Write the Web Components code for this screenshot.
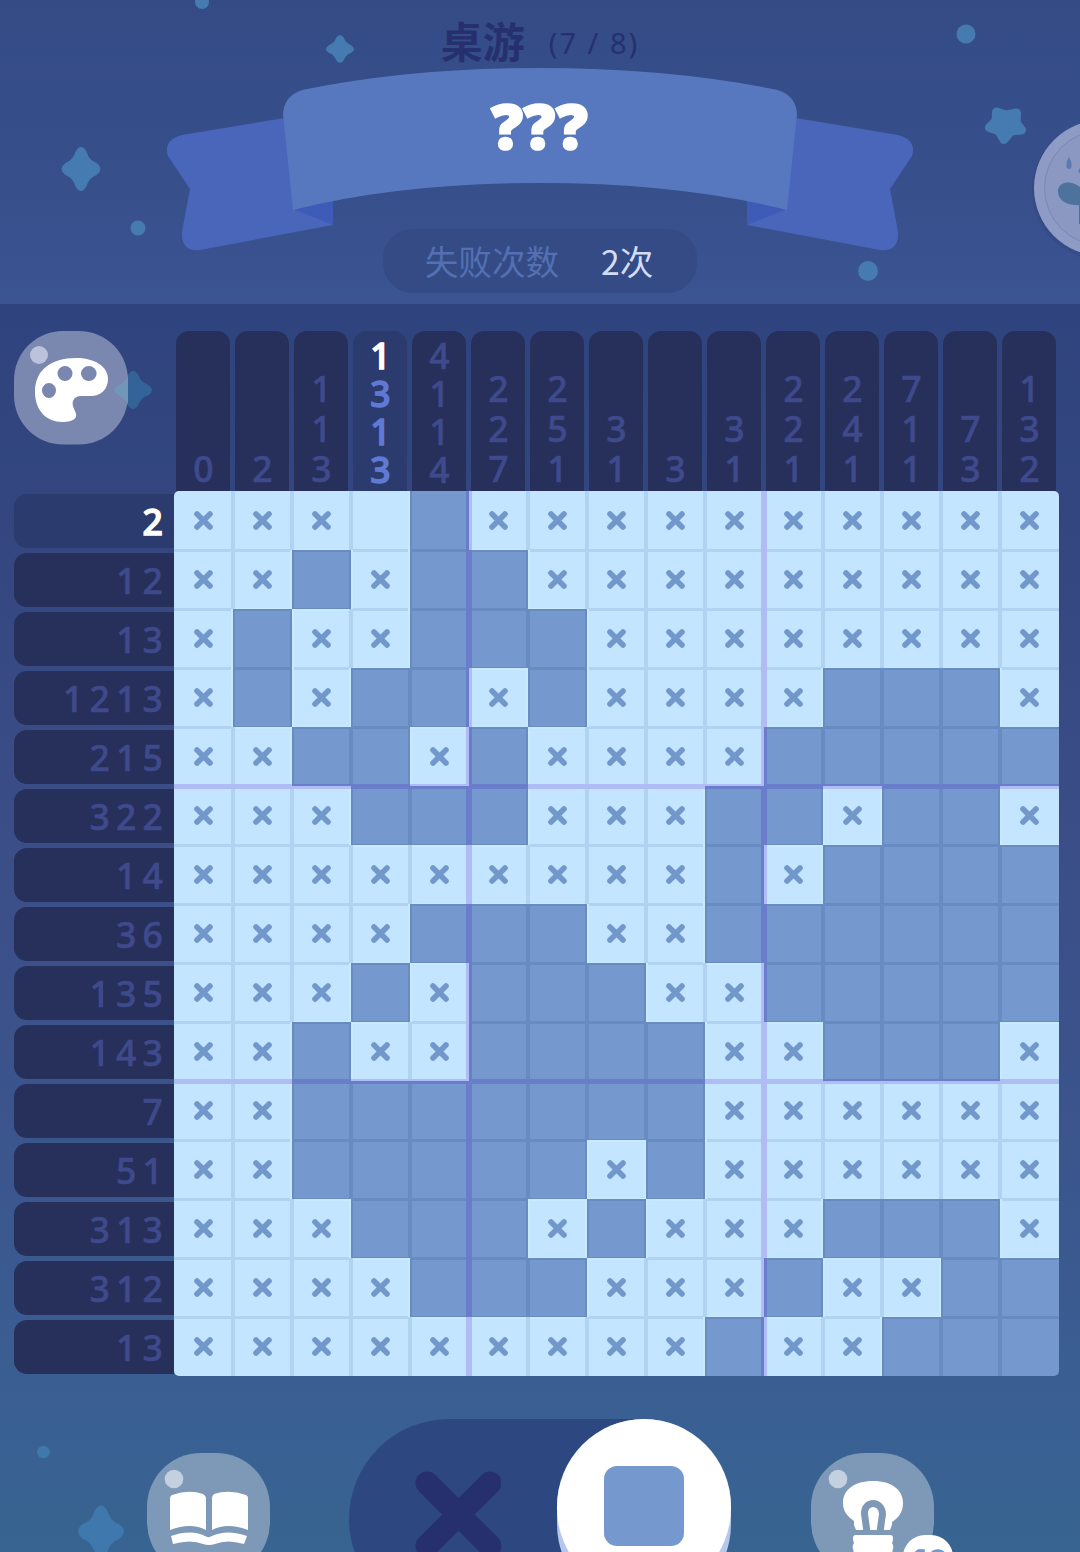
<!DOCTYPE html>
<html lang="zh">
<head>
<meta charset="utf-8">
<title>桌游</title>
<style>
body{
    margin:0;
    width:1080px;
    height:1552px;
    overflow:hidden;
    font-family:"Noto Sans","Noto Sans CJK SC",sans-serif;
}
</style>
</head>
<body>
<game-page>
    <game-header slot="header" failed="2次">
        <span slot="name">桌游</span>
        <span slot="count">(7 / 8)</span>
        <ribbon-title slot="title">???</ribbon-title>
        <span slot="label">失败次数</span>
    </game-header>
    <nono-board slot="board"></nono-board>
    <game-tools slot="tools"></game-tools>
</game-page>

<script>
// clues and cells: # filled, x crossed, . empty
const rowClues = ['2','12','13','1213','215','322','14','36','135','143','7','51','313','312','13']
const colClues = ['0','2','113','1313','4114','227','251','31','3','31','221','241','711','73','132']
const cells = [
    'xxx.#xxxxxxxxxx',
    'xx#x##xxxxxxxxx',
    'x#xx###xxxxxxxx',
    'x#x##x#xxxx###x',
    'xx##x#xxxx#####',
    'xxx###xxx##x##x',
    'xxxxxxxxx#x####',
    'xxxx###xx######',
    'xxx#x###xx#####',
    'xx#xx####xx###x',
    'xx#######xxxxxx',
    'xx#####x#xxxxxx',
    'xxx###x#xxx###x',
    'xxxx###xxx#xx##',
    'xxxxxxxxx#xx###',
]
const activeRow = 0
const activeCol = 3

// four pointed star with soft tips
function sparkle(x, y, w, h, color) {
    return `<path transform="translate(${x} ${y}) scale(${w / 20} ${h / 20})" fill="${color}"
        d="M-5.500 -16Q0 -24 5.500 -16C8 -10 10 -8 16 -5.500Q24 0 16 5.500C10 8 8 10 5.500 16Q0 24 -5.500 16C-8 10 -10 8 -16 5.500Q-24 0 -16 -5.500C-10 -8 -8 -10 -5.500 -16Z"/>`
}

class GamePage extends HTMLElement
{
    constructor() {
        super()
        this._shadowRoot = this.attachShadow({ mode: 'open' })
        this._shadowRoot.innerHTML =
        `<style>
        :host{
            display:grid;
            grid-template-rows:304px 1072px 176px;
            height:1552px;
            overflow:hidden;
            background:linear-gradient(#2f437e 304px, #33467f 520px, #394b85 720px, #3b4f89 900px, #3b568e 1180px, #3a5f93 1400px, #376490 1552px);
        }
        ::slotted(*){ min-width:0; }
        </style>
        <slot name="header"></slot>
        <slot name="board"></slot>
        <slot name="tools"></slot>`
    }
}

class GameHeader extends HTMLElement
{
    constructor() {
        super()
        this._shadowRoot = this.attachShadow({ mode: 'open' })
        const failed = this.getAttribute('failed')
        this._shadowRoot.innerHTML =
        `<style>
        :host{
            display:flex;
            flex-direction:column;
            align-items:center;
            position:relative;
            height:304px;
            overflow:hidden;
            background:linear-gradient(#344b86, #364f8a 50%, #3b5492);
        }
        .sky{ position:absolute; left:0; top:0; }
        .heading{
            display:flex;
            align-items:flex-start;
            gap:24px;
            height:66px;
            color:#27306f;
            position:relative;
            white-space:pre;
        }
        .name{ font:700 42px/80px "Noto Sans CJK SC",sans-serif; }
        .count{ font:400 29px/86px "Noto Sans",sans-serif; letter-spacing:2px; }
        .pill{
            display:flex;
            align-items:center;
            justify-content:center;
            gap:42px;
            box-sizing:border-box;
            padding-right:2px;
            position:relative;
            width:314px;
            height:64px;
            margin-top:-24px;
            border-radius:30px;
            background:#344b86;
            font:400 33.6px/64px "Noto Sans CJK SC",sans-serif;
            color:#5370b2;
        }
        b{ font-weight:400; color:#d3dcf6; }
        </style>
        <svg class="sky" width="1080" height="304">
            ${sparkle(340, 49, 14, 14, '#467bb2')}
            ${sparkle(81, 169, 19.5, 22, '#467bb2')}
            <g fill="#467bb2">
                <circle cx="202" cy="2" r="7"/>
                <circle cx="966" cy="34" r="9.500"/>
                <circle cx="138" cy="228" r="7.500"/>
                <circle cx="868" cy="271" r="10"/>
                <path stroke="#467bb2" stroke-width="9" stroke-linejoin="round"
                    d="M996.500 112L1006 115L1016.500 113L1016 123L1021.500 130L1011 131L1004 139.500L999 131L989.500 127.500L996 121Z"/>
            </g>
            <circle cx="1102" cy="190" r="70" fill="#2b3c78" opacity=".25"/>
            <circle cx="1102" cy="188" r="68" fill="#8e9bc4"/>
            <circle cx="1102" cy="188" r="57.500" fill="#8b98c1" stroke="#7988b5"/>
            <path fill="#5b7ab2" d="M1069 157C1073 164 1072 169 1069 169C1066 169 1065 164 1069 157Z"/>
            <path fill="#4d739d" d="M1080 187C1073 181 1060 180 1058 190C1057 201 1068 206 1079 205L1079 224H1081V187Z"/>
            <circle cx="1081" cy="171" r="2.600" fill="#5b7ab2"/>
        </svg>
        <div class="heading">
            <span class="name"><slot name="name"></slot></span>
            <span class="count"><slot name="count"></slot></span>
        </div>
        <slot name="title"></slot>
        <div class="pill"><slot name="label"></slot><b>${failed}</b></div>`
    }
}

class RibbonTitle extends HTMLElement
{
    constructor() {
        super()
        this._shadowRoot = this.attachShadow({ mode: 'open' })
        this._shadowRoot.innerHTML =
        `<style>
        :host{
            display:grid;
            justify-items:center;
            width:746px;
            height:187px;
        }
        svg, span{ grid-area:1 / 1; }
        span{
            position:relative;
            font:900 62px/119px "Noto Sans",sans-serif;
            letter-spacing:1px;
            color:#fff;
            -webkit-text-stroke:2.5px #fff;
        }
        </style>
        <svg width="746" height="187" viewBox="167 66 746 187">
            <g id="tail">
                <path fill="#4966bb" d="M290 117L182 135Q163 140 168 156L190 189L182 232Q181 252 200 250L333 225V190Z"/>
                <path fill="#3f5bb8" d="M293 209L333 195V225Z"/>
            </g>
            <use href="#tail" transform="translate(1080 0) scale(-1 1)"/>
            <path fill="#5778bf" d="M283 114Q284 96 302 90Q410 68 540 68T778 90Q796 96 797 114L787 210Q680 183 540 183T293 210Z"/>
        </svg>
        <span><slot></slot></span>`
    }
}

class ClueBar extends HTMLElement
{
    constructor() {
        super()
        this._shadowRoot = this.attachShadow({ mode: 'open' })
        const clue = this.getAttribute('clue')
        const digits = this.hasAttribute('column') ? [...clue].map(n => `<span>${n}</span>`).join('') : `<span>${clue}</span>`
        this._shadowRoot.innerHTML =
        `<style>
        :host{
            display:flex;
            align-items:center;
            justify-content:flex-end;
            box-sizing:border-box;
            height:54px;
            padding-right:5px;
            border-radius:13px 0 0 13px;
            background:#272f5b;
            color:#3f4a8c;
            font:500 35.5px/54px "Noto Sans",sans-serif;
            letter-spacing:6.2px;
            -webkit-text-stroke:.6px;
        }
        :host([column]){
            flex-direction:column;
            width:54px;
            height:160px;
            padding:0 0 3px 1px;
            border-radius:13px 13px 0 0;
            letter-spacing:0;
            line-height:40px;
        }
        :host([small]){ line-height:38px; }
        :host([active]){ background:#2b3b6e; color:#fff; -webkit-text-stroke:1.4px; }
        :host([active][column]) span + span{ color:#6079d4; }
        </style>
        ${digits}`
    }
}

class NonoCell extends HTMLElement
{
    constructor() {
        super()
        this._shadowRoot = this.attachShadow({ mode: 'open' })
        const cross = this.getAttribute('state') === 'x' ?
            `<svg width="21" height="21"><path d="M4 4L17 17M17 4L4 17" stroke="#7298cb" stroke-width="5.600" stroke-linecap="round"/></svg>` : ''
        this._shadowRoot.innerHTML =
        `<style>
        :host{
            display:grid;
            place-content:center;
            background:#c4e5ff;
        }
        :host([state="#"]){ background:#7599cf; }
        svg{ display:block; }
        </style>
        ${cross}`
    }
}

class NonoBoard extends HTMLElement
{
    constructor() {
        super()
        this._shadowRoot = this.attachShadow({ mode: 'open' })
        const cols = colClues.map((c, i) =>
            `<clue-bar column clue="${c}" ${c.length > 3 ? 'small' : ''} ${i === activeCol ? 'active' : ''}></clue-bar>`).join('')
        const rows = rowClues.map((c, i) =>
            `<clue-bar clue="${c}" ${i === activeRow ? 'active' : ''}></clue-bar>`).join('')
        let grid = ''
        cells.forEach((line, y) => {
            for (let x = 0; x < 15; x++) {
                grid += `<nono-cell state="${line[x]}" style="box-shadow:${this.lines(x, y)}"></nono-cell>`
            }
        })
        this._shadowRoot.innerHTML =
        `<style>
        :host{
            display:grid;
            grid-template-columns:160px 885px;
            grid-template-rows:160px 885px;
            padding:27px 21px 0 14px;
        }
        .cols{ display:flex; gap:5px; padding-left:2px; }
        .rows{ display:flex; flex-direction:column; gap:5px; padding-top:3px; }
        .cells{
            display:grid;
            grid-template:repeat(15, 59px) / repeat(15, 59px);
            border-radius:5px;
            overflow:hidden;
        }
        </style>
        <palette-button></palette-button>
        <div class="cols">${cols}</div>
        <div class="rows">${rows}</div>
        <div class="cells">${grid}</div>`
    }
    // the line colour depends on both cells that it parts
    lines(x, y) {
        const filled = cells[y][x] === '#'
        const major = [], minor = []
        const add = (nx, ny, isMajor, offset) => {
            if (isMajor) {
                major.push(`inset ${offset} ${filled ? '#697dca' : '#b0bdf4'}`)
            } else if (filled) {
                minor.push(`inset ${offset} #688bc2`)
            } else {
                minor.push(`inset ${offset} ${cells[ny][nx] === '#' ? '#c9eaff' : '#b0d3f2'}`)
            }
        }
        if (x > 0) add(x - 1, y, x % 5 === 0, `${x % 5 ? 2 : 3}px 0`)
        if (x < 14) add(x + 1, y, x % 5 === 4, `${x % 5 < 4 ? -2 : -3}px 0`)
        if (y > 0) add(x, y - 1, y % 5 === 0, `0 ${y % 5 ? 2 : 3}px`)
        if (y < 14) add(x, y + 1, y % 5 === 4, `0 ${y % 5 < 4 ? -1 : -2}px`)
        return [...major, ...minor].join(',')
    }
}

class BubbleButton extends HTMLElement
{
    constructor() {
        super()
        this._shadowRoot = this.attachShadow({ mode: 'open' })
        this._shadowRoot.innerHTML =
        `<style>
        :host{
            display:block;
            width:123px;
            height:123px;
            border-radius:54px;
            background:#7d99b7;
        }
        ::slotted(svg){ display:block; overflow:visible; }
        </style>
        <slot></slot>`
    }
}

class PaletteButton extends HTMLElement
{
    constructor() {
        super()
        this._shadowRoot = this.attachShadow({ mode: 'open' })
        this._shadowRoot.innerHTML =
        `<style>
        :host{ display:block; }
        svg{ display:block; overflow:visible; }
        </style>
        <svg width="146" height="114" viewBox="14 331 146 114">
            ${sparkle(133, 390, 19, 19, '#346399')}
            <rect x="14" y="331" width="114" height="113.500" rx="49" fill="#7a87ae"/>
            <path fill="#7296b8" d="M128 376C124 384 115 385 114 390C115 395 124 396 128 404Z"/>
            <circle cx="39" cy="355" r="9" fill="#bdc2dc"/>
            <path fill="#fff" fill-rule="evenodd" d="M35 392C35 370 51 358 76 358C94 358 108 366 108 379C108 390 100 396 91 396L80 396C73 397 72 402 73 406C74 410 77 413 76 417C74 421 68 422 62 422C47 422 35 411 35 392Z
                M57.500 373.500a7.500 7.500 0 1 0 15 0a7.500 7.500 0 1 0 -15 0Z
                M81 373.500a7.800 7.500 0 1 0 15.600 0a7.800 7.500 0 1 0 -15.600 0Z
                M42 390.500a7 7.500 0 1 0 14 0a7 7.500 0 1 0 -14 0Z"/>
        </svg>`
    }
}

class ModeSwitch extends HTMLElement
{
    constructor() {
        super()
        this._shadowRoot = this.attachShadow({ mode: 'open' })
        this._shadowRoot.innerHTML =
        `<style>
        :host{
            display:flex;
            justify-content:space-between;
            width:382px;
            height:200px;
            border-radius:100px;
            background:#2d4881;
        }
        .cross{ margin:52px 0 0 66px; }
        .knob{
            width:174px;
            height:192px;
            border-radius:87px;
            background:#b5c8ec;
        }
        .face{
            display:grid;
            justify-items:center;
            height:177px;
            border-radius:50%;
            background:#fff;
        }
        .square{
            width:80px;
            height:80px;
            margin-top:47px;
            border-radius:13px;
            background:#7599cf;
        }
        </style>
        <svg class="cross" width="86" height="86"><path d="M12 12L75 75M75 12L12 75" stroke="#27306f" stroke-width="23" stroke-linecap="round"/></svg>
        <div class="knob"><div class="face"><div class="square"></div></div></div>`
    }
}

class GameTools extends HTMLElement
{
    constructor() {
        super()
        this._shadowRoot = this.attachShadow({ mode: 'open' })
        this._shadowRoot.innerHTML =
        `<style>
        :host{
            display:flex;
            align-items:flex-start;
            position:relative;
            height:176px;
            box-sizing:border-box;
            padding:43px 0 0 147px;
            overflow:hidden;
        }
        .sky{ position:absolute; left:0; top:0; }
        bubble-button{ margin-top:34px; }
        mode-switch{ margin:0 80px 0 79px; }
        .badge{
            position:absolute;
            left:903px;
            top:159px;
            width:50px;
            height:50px;
            border-radius:22px;
            background:#fff;
            color:#7599cf;
            text-align:center;
            font:900 33px/53px "Noto Sans",sans-serif;
            -webkit-text-stroke:1.5px;
        }
        </style>
        <svg class="sky" width="300" height="176" viewBox="0 1376 300 176">
            <circle cx="43.500" cy="1452" r="6.300" fill="#3f78ac"/>
            ${sparkle(101, 1531.5, 23, 26, '#3f78ac')}
        </svg>
        <bubble-button>
            <svg width="123" height="123" viewBox="147 1453 123 123">
                <circle cx="174" cy="1479" r="9.300" fill="#c3d0e0"/>
                <g fill="#fff">
                    <path d="M170 1498Q170 1496 172 1495Q189 1489 203 1494Q206 1496 206 1498V1530Q191 1522 170 1530Z"/>
                    <path d="M248 1498Q248 1496 246 1495Q229 1489 214 1494Q212 1496 212 1498V1530Q227 1522 248 1530Z"/>
                    <path d="M171 1536Q192 1529 206 1536.500Q209 1538 212 1536Q227 1529 247 1536L244 1544Q227 1539 215 1544Q209 1546 203 1544Q191 1539 173 1544Z"/>
                </g>
            </svg>
        </bubble-button>
        <mode-switch></mode-switch>
        <bubble-button>
            <svg width="123" height="123" viewBox="811 1453 123 123">
                <circle cx="838" cy="1479" r="9.300" fill="#c3d0e0"/>
                <path fill="#fff" d="M873 1481C892 1481 903 1490 903 1503C903 1513 898 1518 892 1522V1525L890 1530H856L854 1525V1521C847 1516 843 1511 843 1503C843 1490 854 1481 873 1481Z"/>
                <path fill="#fff" stroke="#7d99b7" stroke-width="7" d="M867 1532L864.500 1514C864 1500 882 1500 882.500 1514L880 1532"/>
                <rect x="862" y="1530" width="22" height="5" fill="#7d99b7"/>
                <path fill="#fff" d="M856 1535H890Q893 1535 893 1538Q893 1541 892 1543Q894 1546 893 1549Q892 1551 893 1553V1560H853V1553Q854 1551 853 1549Q852 1546 854 1543Q853 1541 853 1538Q853 1535 856 1535Z"/>
            </svg>
        </bubble-button>
        <span class="badge">10</span>`
    }
}

window.customElements.define('clue-bar', ClueBar)
window.customElements.define('nono-cell', NonoCell)
window.customElements.define('palette-button', PaletteButton)
window.customElements.define('nono-board', NonoBoard)
window.customElements.define('bubble-button', BubbleButton)
window.customElements.define('mode-switch', ModeSwitch)
window.customElements.define('ribbon-title', RibbonTitle)
window.customElements.define('game-header', GameHeader)
window.customElements.define('game-tools', GameTools)
window.customElements.define('game-page', GamePage)
</script>
</body>
</html>
